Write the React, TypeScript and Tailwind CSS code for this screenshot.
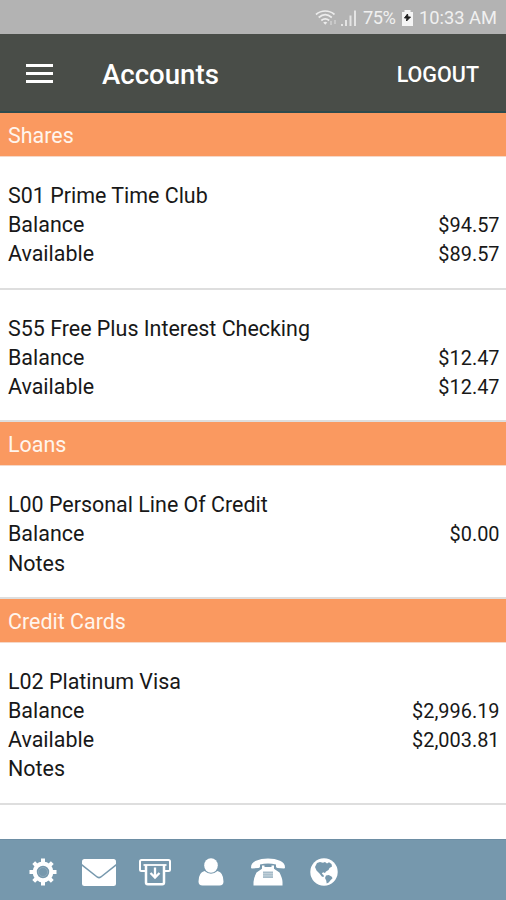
import React from 'react';

interface AccountLine {
  label: string;
  amount?: string;
}

interface Account {
  name: string;
  lines: AccountLine[];
}

interface Section {
  title: string;
  accounts: Account[];
}

const sections: Section[] = [
  {
    title: 'Shares',
    accounts: [
      {
        name: 'S01 Prime Time Club',
        lines: [
          { label: 'Balance', amount: '$94.57' },
          { label: 'Available', amount: '$89.57' },
        ],
      },
      {
        name: 'S55 Free Plus Interest Checking',
        lines: [
          { label: 'Balance', amount: '$12.47' },
          { label: 'Available', amount: '$12.47' },
        ],
      },
    ],
  },
  {
    title: 'Loans',
    accounts: [
      {
        name: 'L00 Personal Line Of Credit',
        lines: [{ label: 'Balance', amount: '$0.00' }, { label: 'Notes' }],
      },
    ],
  },
  {
    title: 'Credit Cards',
    accounts: [
      {
        name: 'L02 Platinum Visa',
        lines: [
          { label: 'Balance', amount: '$2,996.19' },
          { label: 'Available', amount: '$2,003.81' },
          { label: 'Notes' },
        ],
      },
    ],
  },
];

const StatusBar = () => (
  <div className="flex h-[34px] shrink-0 items-center justify-end bg-[#b3b3b3] pr-[8px] pt-[1px] text-[18.3px] text-[#f0f0f0]">
    <svg className="-ml-1" width="23" height="18" viewBox="0 0 23 18" fill="none" stroke="#ececec" strokeWidth="1.7">
      <path d="M1 5.5C6.500.8 14 .8 19.500 5.500M3.700 8.500C7.800 5 12.700 5 16.800 8.500M6.300 11.500C8.800 9.300 11.700 9.300 14.200 11.500" />
      <path d="M8.200 13.500Q10.250 12 12.300 13.500L10.250 15.800Z" fill="#ececec" stroke="none" />
      <path d="M16 12v4M20 11v4" stroke="#c9c9c9" strokeWidth="2" />
    </svg>
    <svg className="ml-[2px]" width="17" height="18" viewBox="0 0 17 18" fill="#e4e4e4">
      <path d="M1 15h2v2H1zM5 11h2v6H5zM9.500 6.500h2V17h-2zM14 1.500h2V17h-2z" />
    </svg>
    <span className="ml-[6px] w-[34px] tracking-[-0.5px]">75%</span>
    <svg className="ml-[4px]" width="13" height="18" viewBox="0 0 13 18">
      <path d="M3.500 1h6v2H12v14H1V3h2.500z" fill="#f5f5f5" />
      <path d="M6.500 5 3.500 9h2.500L5.500 12 9.500 8H7z" fill="#222" stroke="#222" />
    </svg>
    <span className="ml-[5px] w-[79px] whitespace-nowrap">10:33 AM</span>
  </div>
);

const Header = () => (
  <header className="flex h-[79px] shrink-0 items-center border-b-2 border-[#2d4b4e] bg-[#494d48] pl-[26px] pr-[27px] text-white">
    <button className="mt-[2px] flex w-[27px] flex-col gap-[5px]" aria-label="Menu">
      <span className="h-[3px] w-full bg-white" />
      <span className="h-[3px] w-full bg-white" />
      <span className="h-[3px] w-full bg-white" />
    </button>
    <h1 className="ml-[49px] mt-[5px] text-[27.6px] font-medium">Accounts</h1>
    <button className="ml-auto mt-[6px] text-[21.5px] font-medium">LOGOUT</button>
  </header>
);

const AccountItem: React.FC<{ account: Account }> = ({ account }) => (
  <div className="border-b-2 border-[#dedede] pb-[19.4px] pl-2 pr-[6.5px] pt-[24px] leading-[29.15px]">
    <div>{account.name}</div>
    {account.lines.map((line) => (
      <div key={line.label} className="flex h-[29.15px] justify-between">
        <span>{line.label}</span>
        <span className="mt-[1px] text-[19.9px]">{line.amount}</span>
      </div>
    ))}
  </div>
);

const GearIcon = () => (
  <svg width="28" height="28" viewBox="0 0 28 28" fill="none" stroke="white">
    <circle cx="14" cy="14" r="8.300" strokeWidth="4.200" />
    <circle cx="14" cy="14" r="4.500" stroke="#8eaabb" strokeWidth="1" />
    <g strokeWidth="4">
      <path d="M14 .5v4M14 23.500v4M.5 14h4M23.500 14h4" />
      <path d="m4.700 4.700 2.800 2.800M20.500 20.500l2.800 2.800M23.300 4.700l-2.800 2.800M7.500 20.500l-2.800 2.800" />
    </g>
  </svg>
);

const MailIcon = () => (
  <svg width="34" height="27" viewBox="0 0 34 27" fill="white">
    <path d="M2.500 0h29Q34 0 34 2.500v2.500L19 17Q17 18.500 15 17L0 5v-2.500Q0 0 2.500 0Z" />
    <path d="M0 7 15 18.800Q17 20.300 19 18.800L34 7V24.500Q34 27 31.500 27h-29Q0 27 0 24.500Z" />
  </svg>
);

const WithdrawIcon = () => (
  <svg width="34" height="28" viewBox="0 0 34 28" fill="none" stroke="white" strokeWidth="2">
    <path d="M7 13H3.500Q2 13 2 11.500V3.500Q2 2 3.500 2h27Q32 2 32 3.500v8Q32 13 30.500 13H27" />
    <path d="M5.500 7h23" strokeWidth="1.800" />
    <path d="M8 7v17.500q0 1.700 1.700 1.700h14.600q1.700 0 1.700-1.700V7" strokeWidth="2.500" />
    <path d="M17 9.500v10M12.500 15l4.500 4.500 4.500-4.500" strokeWidth="2.300" />
  </svg>
);

const UserIcon = () => (
  <svg width="26" height="28" viewBox="0 0 26 28" fill="white">
    <ellipse cx="13" cy="7.500" rx="6.800" ry="7.300" />
    <path d="M6.500 13Q13 18.500 19.500 13Q25.500 14.500 25.500 23.500Q25.500 27.500 21.500 27.500h-17Q.5 27.500 .5 23.500Q.5 14.500 6.500 13Z" />
  </svg>
);

const PhoneIcon = () => (
  <svg width="34" height="28" viewBox="0 0 34 28" fill="white">
    <path d="M0 9.500Q0 5 5 2.800Q10 .5 17 .5T29 2.800Q34 5 34 9.500Q34 10.500 33 10.500L26.500 10Q25 9.800 25 8.500V6.500Q17 4.300 9 6.500v2Q9 9.800 7.500 10L1 10.500Q0 10.500 0 9.500Z" />
    <path d="M11 7.500h2.500V9h7V7.500H23v3.200L28.500 14.500Q31.500 20.500 31.500 24v3.500h-29V24Q2.500 20.500 5.500 14.500L11 10.700Z" />
    <path d="M12 13.500h10v6.500h-10z" fill="#a5bbc8" />
    <path d="M12 15.700h10M12 17.900h10" stroke="#d5dfe5" strokeWidth=".7" />
  </svg>
);

const GlobeIcon = () => (
  <svg width="28" height="28" viewBox="0 0 28 28">
    <circle cx="14" cy="14" r="13.700" fill="white" />
    <path
      d="m7 5 3-1 3 .8 2-.8 2 1.500 2-1.200 2.500 1.700.5 2.500-2.500 1.500-1 2-2.500 1.500-1 1.500-2-.8-1.200 1.600 1.700 1.200.5 1.800h-2L9.500 15.500 6.500 12.500 5 9Z"
      fill="#7698ad"
    />
    <path d="m16 17.500 2.800-.5 3 1.700.7 1.500-2 2-1.800 2.300-2 1-.5-3-1.200-2.500Z" fill="#7698ad" />
  </svg>
);

const Footer = () => (
  <footer className="flex h-[61px] shrink-0 items-center border-t border-[#6d8ea4] bg-[#7698ad] pl-[28.500px] pt-[4px]">
    <nav className="flex items-center">
      <GearIcon />
      <div className="ml-[25.500px]"><MailIcon /></div>
      <div className="ml-[22px]"><WithdrawIcon /></div>
      <div className="ml-[26px]"><UserIcon /></div>
      <div className="ml-[26.500px]"><PhoneIcon /></div>
      <div className="ml-[25.500px]"><GlobeIcon /></div>
    </nav>
  </footer>
);

const App: React.FC = () => {
  return (
    <div className="flex h-[900px] w-[506px] flex-col overflow-hidden bg-white font-[Roboto,sans-serif] text-[21.45px] text-[#181818]">
      <StatusBar />
      <Header />
      <main className="flex-1">
        {sections.map((section) => (
          <section key={section.title}>
            <h2 className="flex h-[43.8px] items-center border-b border-[#f5d8c8] bg-[#fa9960] pl-2 pt-[3px] text-[#fff5ed]">
              {section.title}
            </h2>
            {section.accounts.map((account) => (
              <AccountItem key={account.name} account={account} />
            ))}
          </section>
        ))}
      </main>
      <Footer />
    </div>
  );
};

export default App;
